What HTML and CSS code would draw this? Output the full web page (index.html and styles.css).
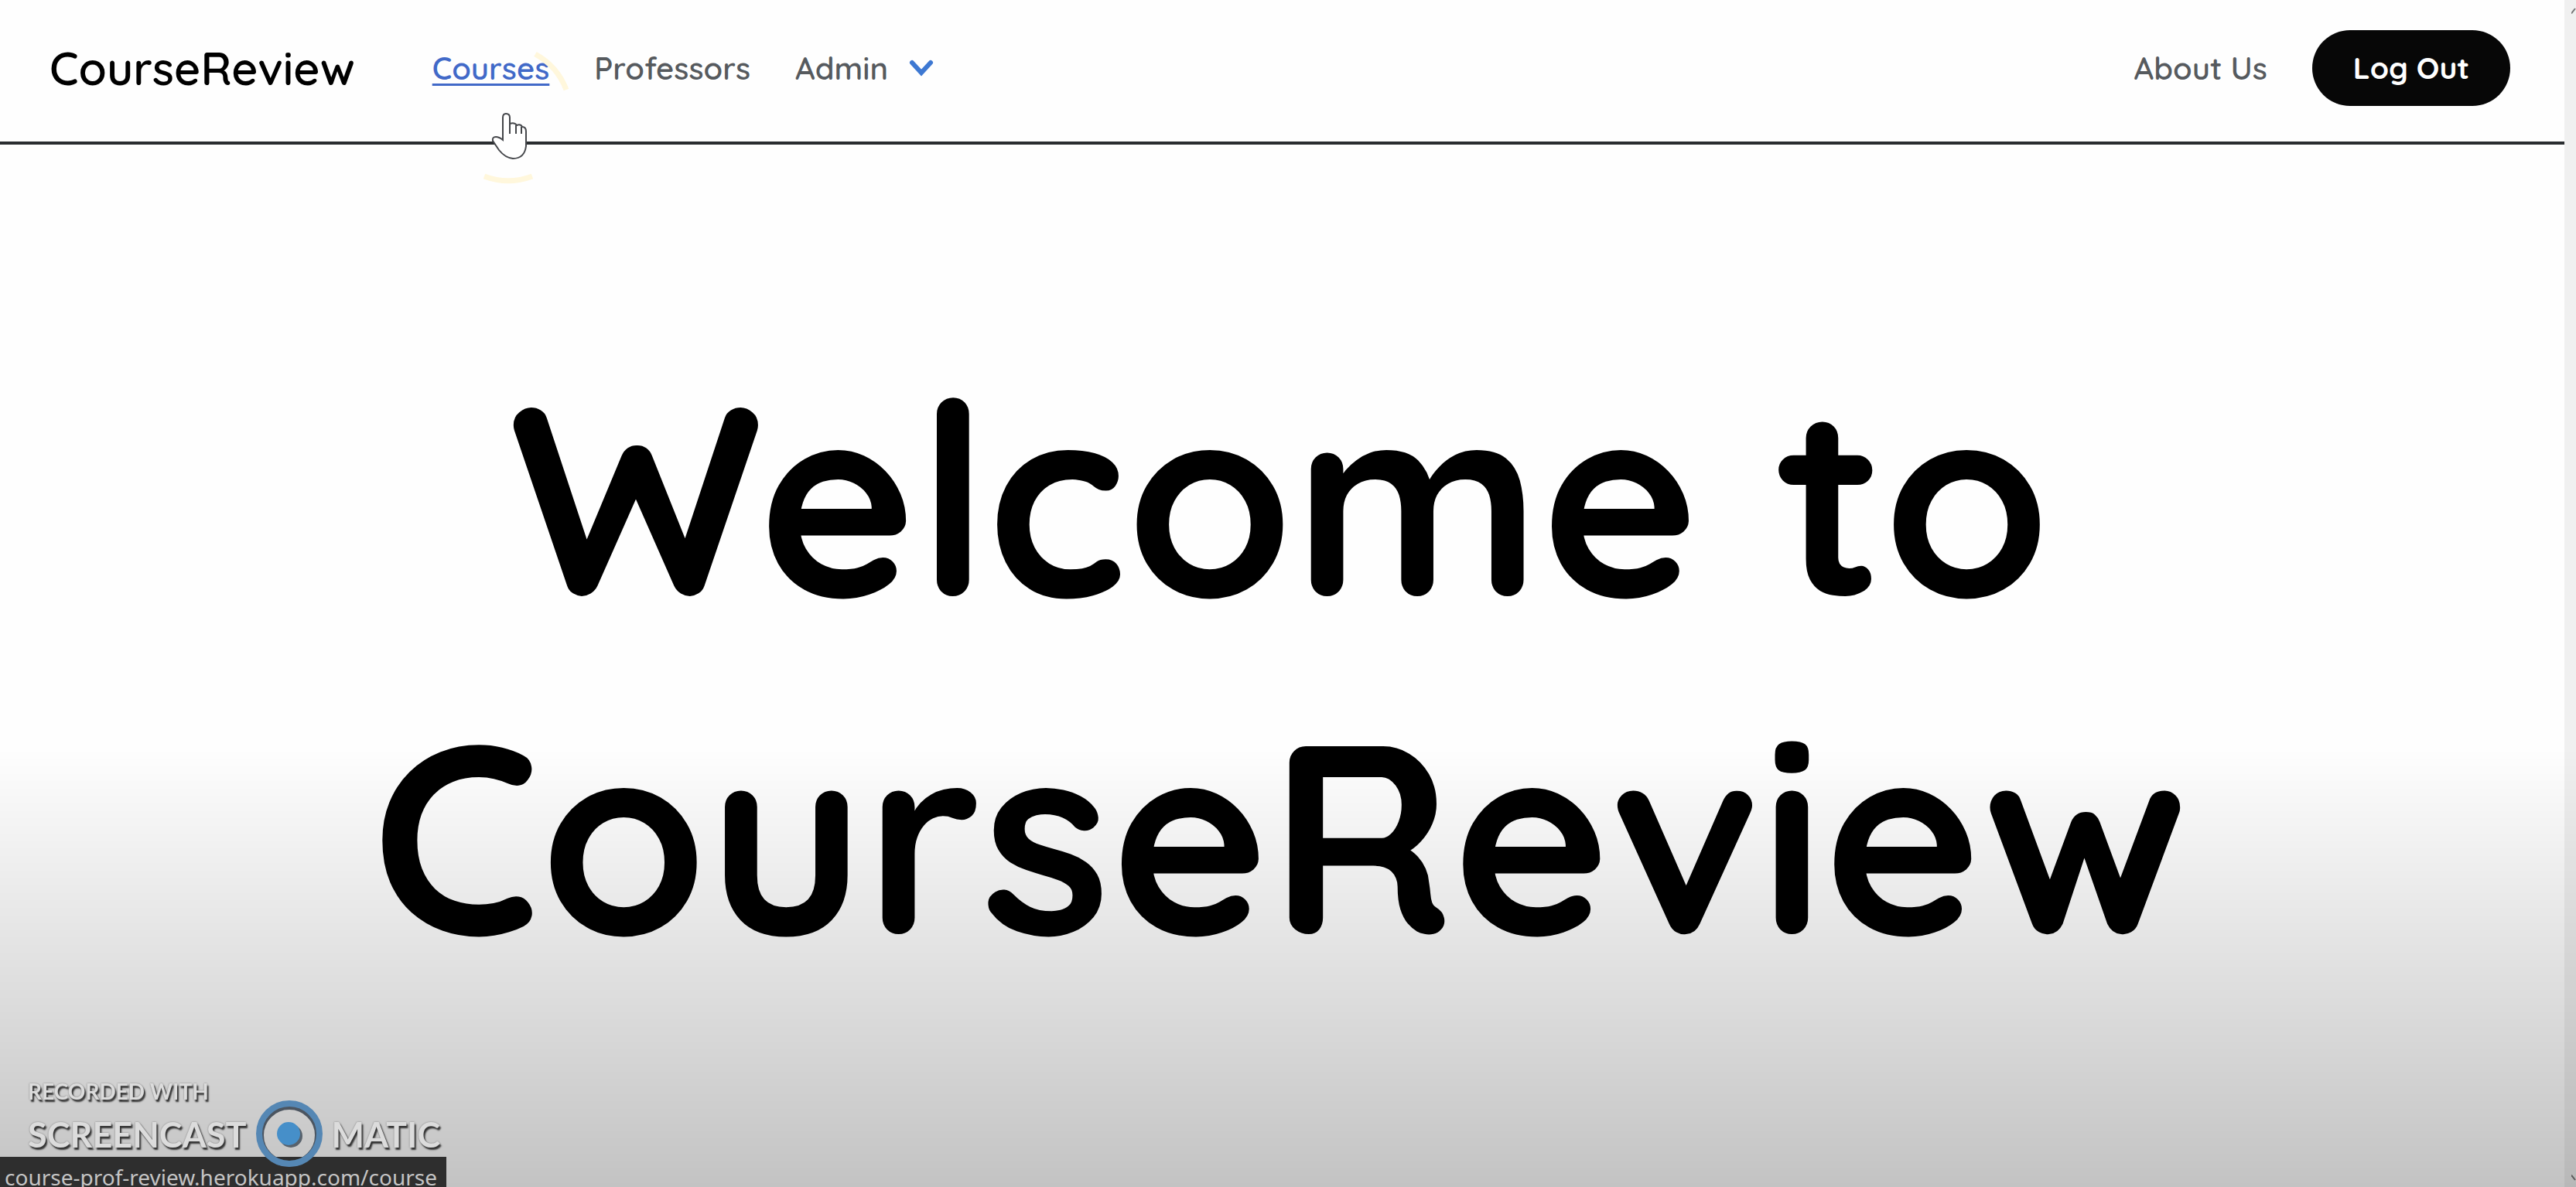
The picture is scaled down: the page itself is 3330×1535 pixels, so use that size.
FILE: index.html
```html
<!DOCTYPE html>
<html lang="en">
<head>
<meta charset="utf-8">
<title>CourseReview</title>
<link rel="stylesheet" href="styles.css">
</head>
<body>
<div class="window">
  <div class="page">
    <header class="navbar">
      <a class="brand" href="#">CourseReview</a>
      <nav class="links">
        <a class="link link-active" href="#">Courses</a>
        <a class="link" href="#">Professors</a>
        <button class="link link-menu" type="button">Admin
          <svg class="chevron" viewBox="0 0 34 26" aria-hidden="true"><path d="M5 6 L17 19 L29 6"/></svg>
        </button>
      </nav>
      <div class="account">
        <a class="link" href="#">About Us</a>
        <button class="logout" type="button">Log Out</button>
      </div>
    </header>
    <main class="hero">
      <h1 class="title">Welcome to<br>CourseReview</h1>
    </main>
  </div>
  <div class="scrollbar" aria-hidden="true">
    <svg class="arrow" viewBox="0 0 12 16"><path d="M0 15 L10 2"/></svg>
    <svg class="arrow" viewBox="0 0 12 16"><path d="M0 1 L10 14"/></svg>
  </div>
</div>
<div class="shade"></div>
<svg class="pointer" viewBox="0 0 200 200" aria-hidden="true">
  <g class="pulse"><path d="M142 22 A88 88 0 0 1 182 68"/><path d="M76 180 A88 88 0 0 0 138 180"/></g>
  <path class="hand" d="M100 133 V104 Q100 99 104 99 Q109 99 109 104 V112 Q115 110 118 114 Q123 112 125 116 Q130 116 130 122 V141 Q128 157 113 157 Q103 156 95 146 L87 134 Q86 129 91 129 Q95 129 100 133 Z"/>
  <path class="knuckles" d="M109 112 V125 M117 114 V125 M124 116 V125"/>
</svg>
<div class="status">course-prof-review.herokuapp.com/course</div>
<div class="watermark">
  <span class="mark-small">RECORDED WITH</span>
  <div class="mark-row">
    <span>SCREENCAST</span>
    <svg class="disc" viewBox="0 0 88 88" aria-hidden="true"><circle class="disc-shadow" cx="44" cy="45" r="37"/><circle class="disc-ring" cx="44" cy="43" r="39"/><circle class="disc-shadow-dot" cx="46" cy="46" r="15"/><circle class="disc-dot" cx="43" cy="43" r="15"/></svg>
    <span>MATIC</span>
  </div>
</div>
</body>
</html>
```
FILE: styles.css
```css
* { box-sizing: border-box; }
body {
  margin: 0;
  background: #fefefe;
  color: #000;
  font-family: Quicksand, Inter, sans-serif;
  overflow: hidden;
}
a { color: inherit; text-decoration: none; }
button { font: inherit; border: 0; background: none; padding: 0; cursor: pointer; }
.window { display: flex; min-height: 100vh; }
.page { flex: 1; }
.navbar {
  display: flex;
  align-items: center;
  height: 187px;
  padding: 0 70px 8px 64px;
  border-bottom: 4px solid #2a2d30;
}
.brand { font-size: 59px; font-weight: 600; margin-right: 100px; }
.links, .account { display: flex; align-items: center; gap: 58px; }
.account { margin-left: auto; }
.link { font-size: 40px; font-weight: 600; color: #565a5e; white-space: nowrap; }
.link-active { color: #4169c8; text-decoration: underline; text-decoration-thickness: 3px; text-underline-offset: 5px; }
.link-menu { display: flex; align-items: center; gap: 26px; }
.chevron { width: 34px; height: 26px; fill: none; stroke: #3d78d2; stroke-width: 6; stroke-linecap: round; }
.logout {
  width: 256px;
  height: 98px;
  border-radius: 49px;
  background: #070707;
  color: #fff;
  font-size: 39px;
  font-weight: 700;
}
.hero { padding: 236px 6px 0 0; text-align: center; }
.title { margin: 0; font-size: 347px; line-height: 437px; font-weight: 700; }
.scrollbar {
  display: flex;
  flex-direction: column;
  justify-content: space-between;
  align-items: flex-end;
  width: 15px;
  padding: 6px 0 4px;
  background: #f0f0f0;
}
.arrow { width: 6px; height: 16px; fill: none; stroke: #777; stroke-width: 4; }
.shade {
  position: fixed;
  inset: 63vh 0 0;
  background: linear-gradient(rgba(0, 0, 0, 0), rgba(0, 0, 0, .23));
  pointer-events: none;
}
.pointer { position: absolute; left: 550px; top: 48px; width: 200px; height: 200px; fill: none; pointer-events: none; }
.pulse { stroke: #fff7dc; stroke-width: 7; }
.hand { fill: #fff; stroke: #44464a; stroke-width: 2; }
.knuckles { stroke: #44464a; stroke-width: 2; }
.status {
  position: fixed;
  left: 0;
  bottom: 0;
  height: 39px;
  padding: 10px 12px 0 6px;
  overflow: hidden;
  background: #2e2e2e;
  color: #c4c4c4;
  font: 28px/32px "Noto Sans", sans-serif;
  white-space: nowrap;
}
.watermark {
  position: fixed;
  left: 36px;
  bottom: 24px;
  color: #dcdcdc;
  font-family: Lato, sans-serif;
  font-weight: 700;
  text-shadow: 2px 3px 2px #333, 0 0 2px #777;
}
.mark-small { display: block; font-size: 28px; line-height: 24px; }
.mark-row { display: flex; align-items: center; gap: 11px; font-size: 45px; line-height: 88px; }
.disc { width: 88px; height: 88px; fill: none; }
.disc-shadow { stroke: #4c5560; stroke-width: 8; }
.disc-ring { stroke: #5587b4; stroke-width: 8; }
.disc-shadow-dot { fill: #58626c; }
.disc-dot { fill: #468fc9; }
```
